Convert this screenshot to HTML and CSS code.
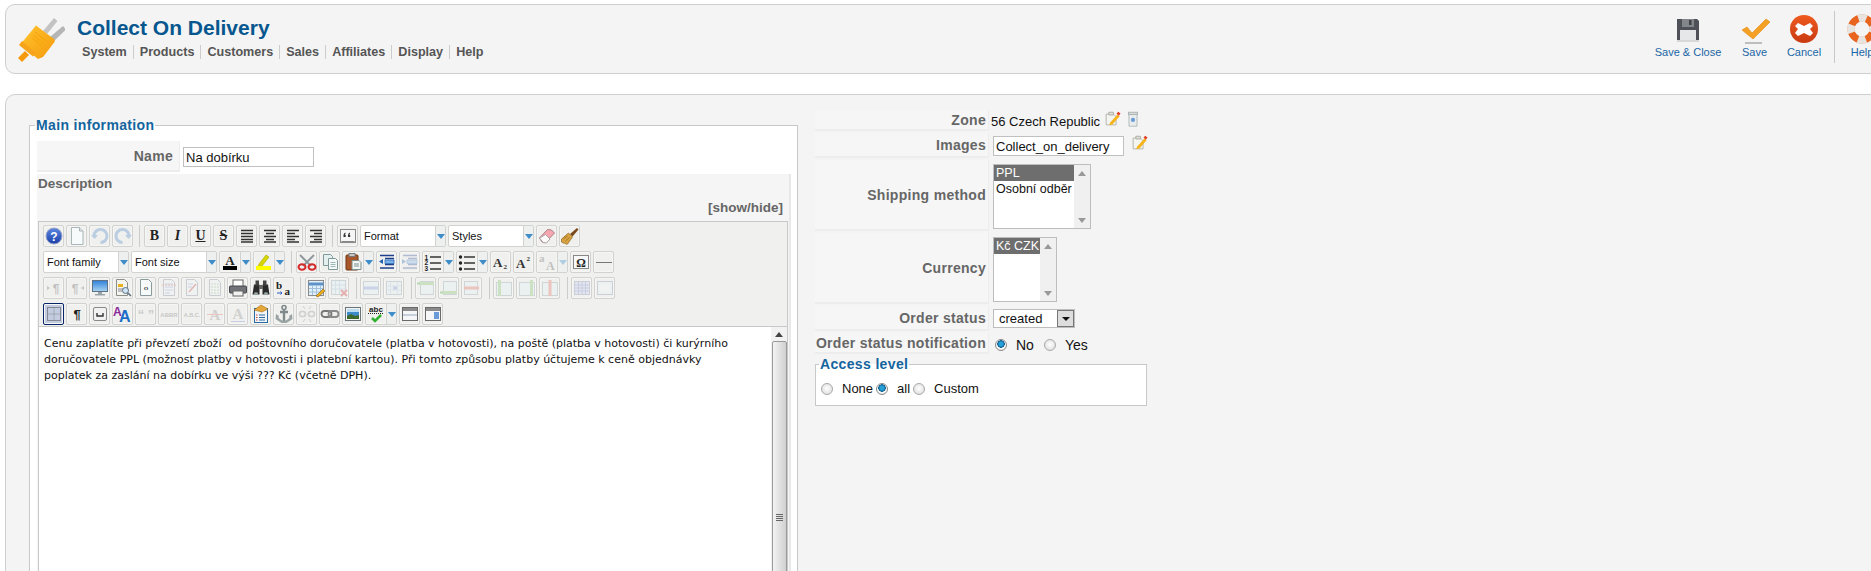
FILE: index.html
```html
<!DOCTYPE html>
<html lang="cs">
<head>
<meta charset="utf-8">
<title>Collect On Delivery</title>
<link rel="stylesheet" href="styles.css">
</head>
<body>
<svg class="defs" aria-hidden="true">
<defs>
<linearGradient id="gBlue" x1="0" y1="0" x2="0" y2="1"><stop offset="0" stop-color="#5b86e0"/><stop offset="1" stop-color="#1a3fa8"/></linearGradient>
<linearGradient id="gOrange" x1="0" y1="0" x2="1" y2="1"><stop offset="0" stop-color="#ffc42e"/><stop offset="1" stop-color="#f59a0c"/></linearGradient>
<linearGradient id="gRed" x1="0" y1="0" x2="0" y2="1"><stop offset="0" stop-color="#ee5a1e"/><stop offset="1" stop-color="#c93a12"/></linearGradient>
<linearGradient id="gScreen" x1="0" y1="0" x2="0" y2="1"><stop offset="0" stop-color="#2f7fd8"/><stop offset="1" stop-color="#a9d4f4"/></linearGradient>
<symbol id="i-help" viewBox="0 0 20 20"><circle cx="10" cy="10" r="8" fill="url(#gBlue)" stroke="#9aa6c8"/><text x="10" y="14.500" class="ig b" font-size="12" fill="#fff" text-anchor="middle">?</text></symbol>
<symbol id="i-new" viewBox="0 0 20 20"><path d="M4.500 1.500h8l3.500 3.500v13.500h-11.500z" fill="#f8fbfb" stroke="#a9b6b6"/><path d="M12.500 1.500v3.500h3.500" fill="#dfe8e8" stroke="#a9b6b6"/></symbol>
<symbol id="i-undo" viewBox="0 0 20 20"><path d="M4 10a6.500 6.500 0 1 1 6.500 6.500" fill="none" stroke="#3f7fc4" stroke-width="3"/><path d="M1 9l3.500 4 3.500-4z" fill="#3f7fc4" transform="rotate(0)"/></symbol>
<symbol id="i-redo" viewBox="0 0 20 20"><path d="M16 10a6.500 6.500 0 1 0-6.500 6.500" fill="none" stroke="#3f7fc4" stroke-width="3"/><path d="M19 9l-3.500 4-3.500-4z" fill="#3f7fc4"/></symbol>
<symbol id="i-full" viewBox="0 0 20 20"><path d="M4 4.500h12M4 7.500h12M4 10.500h12M4 13.500h12M4 16h12" stroke="#333" stroke-width="1.300"/></symbol>
<symbol id="i-center" viewBox="0 0 20 20"><path d="M4 4.500h12M6 7.500h8M4 10.500h12M6 13.500h8M4 16h12" stroke="#333" stroke-width="1.300"/></symbol>
<symbol id="i-left" viewBox="0 0 20 20"><path d="M4 4.500h12M4 7.500h8M4 10.500h12M4 13.500h8M4 16h12" stroke="#333" stroke-width="1.300"/></symbol>
<symbol id="i-right" viewBox="0 0 20 20"><path d="M4 4.500h12M8 7.500h8M4 10.500h12M8 13.500h8M4 16h12" stroke="#333" stroke-width="1.300"/></symbol>
<symbol id="i-quote" viewBox="0 0 20 20"><rect x="2.500" y="3.500" width="15" height="13" fill="#f6f6f6" stroke="#8a8a8a"/><rect x="3.500" y="15" width="13" height="1" fill="#888"/><path d="M5.500 11V9.200q0-1.800 2-2.700v1.200q-.7.400-.7 1h.9V11zM10 11V9.200q0-1.800 2-2.700v1.200q-.7.400-.7 1h.9V11z" fill="#333"/></symbol>
<symbol id="i-eraser" viewBox="0 0 20 20"><path d="M2.500 12l8-8.500 4 .5 3 3-9 9.500-3.500-.5z" fill="#f6a6b0" stroke="#b08088"/><path d="M2.500 12l3.500 4.500 3.500.5 3.500-4-4.500-4.500z" fill="#fbfbfb" stroke="#b0a0a0"/></symbol>
<symbol id="i-broom" viewBox="0 0 20 20"><path d="M1.500 13l7-6 4 4-5 7c-2 1-2.500-1-3-1s-1 .5-3-1z" fill="#d9a441" stroke="#8c6420" stroke-width=".7"/><path d="M3.500 13l4-3M5.500 15l4-3.500" stroke="#8c6420" stroke-width=".7"/><path d="M10 8l7-6 1.500 1.500-6 7z" fill="#7a4a1c"/></symbol>
<symbol id="i-color" viewBox="0 0 20 20"><text x="10" y="12.500" class="ig s" font-size="13" fill="#222" text-anchor="middle">A</text><rect x="3" y="14" width="14" height="4" fill="#000"/></symbol>
<symbol id="i-hilite" viewBox="0 0 20 20"><path d="M5 12l7-9 3 2-7 9-4 1z" fill="#d8d600" stroke="#a8a800" stroke-width=".6"/><rect x="2" y="14" width="15" height="4" fill="#ff0"/></symbol>
<symbol id="i-cut" viewBox="0 0 20 20"><path d="M3 3l11 11M17 3L6 14" stroke="#8d979c" stroke-width="1.800"/><ellipse cx="5" cy="15" rx="3.500" ry="2.700" fill="none" stroke="#d52a2a" stroke-width="2"/><ellipse cx="15" cy="15" rx="3.500" ry="2.700" fill="none" stroke="#d52a2a" stroke-width="2"/></symbol>
<symbol id="i-copy" viewBox="0 0 20 20"><path d="M3.500 2.500h7l2 2v9h-9z" fill="#e4f0ee" stroke="#7f9a98"/><path d="M8.500 6.500h7l2 2v9h-9z" fill="#f4faf9" stroke="#7f9a98"/><path d="M10.500 10.500h5M10.500 12.500h5M10.500 14.500h5" stroke="#9db5b3"/></symbol>
<symbol id="i-paste" viewBox="0 0 20 20"><rect x="3" y="3" width="12" height="15" rx="1" fill="#a8562a" stroke="#6d3615"/><rect x="6" y="1.500" width="6" height="3" fill="#c9c9c9" stroke="#777"/><path d="M9 8.500h7l2 2v7H9z" fill="#f2f6f5" stroke="#7c8f8d"/><path d="M11 12h5M11 14h5" stroke="#7c8f8d"/></symbol>
<symbol id="i-outdent" viewBox="0 0 20 20"><path d="M3 3.500h14M8 6.500h9M8 12.500h9M3 16h14" stroke="#1f3f8c" stroke-width="1.300"/><rect x="7" y="8" width="10" height="3.500" fill="#7ab2ec" stroke="#1f5fb0" stroke-width=".7"/><path d="M2 7l4 2.500L2 12z" fill="#1f5fb0"/></symbol>
<symbol id="i-indent" viewBox="0 0 20 20"><path d="M3 3.500h14M8 6.500h9M8 12.500h9M3 16h14" stroke="#1f3f8c" stroke-width="1.300"/><rect x="8" y="8" width="9" height="3.500" fill="#7ab2ec" stroke="#1f5fb0" stroke-width=".7"/><path d="M6 7l-4 2.500L6 12z" fill="#1f5fb0"/></symbol>
<symbol id="i-num" viewBox="0 0 20 20"><text x="1.500" y="7.500" class="ig b" font-size="6.500" fill="#222">1</text><text x="1.500" y="13.300" class="ig b" font-size="6.500" fill="#222">2</text><text x="1.500" y="19" class="ig b" font-size="6.500" fill="#222">3</text><path d="M7 5h11M7 11h11M7 17h11" stroke="#333" stroke-width="1.300"/></symbol>
<symbol id="i-bul" viewBox="0 0 20 20"><circle cx="3.500" cy="5" r="1.700" fill="#222"/><circle cx="3.500" cy="11" r="1.700" fill="#222"/><circle cx="3.500" cy="17" r="1.700" fill="#222"/><path d="M7 5h11M7 11h11M7 17h11" stroke="#333" stroke-width="1.300"/></symbol>
<symbol id="i-sub" viewBox="0 0 20 20"><text x="2" y="15" class="ig s" font-size="13" fill="#333">A</text><text x="12.500" y="17" class="ig s" font-size="7" fill="#333">2</text></symbol>
<symbol id="i-sup" viewBox="0 0 20 20"><text x="2" y="16" class="ig s" font-size="13" fill="#333">A</text><text x="12.500" y="9" class="ig s" font-size="7" fill="#333">2</text></symbol>
<symbol id="i-fontab" viewBox="0 0 20 20"><text x="2" y="10" class="ig s" font-size="11" fill="#555">a</text><text x="9" y="18" class="ig s" font-size="12" fill="#555">A</text></symbol>
<symbol id="i-omega" viewBox="0 0 20 20"><rect x="2.500" y="3.500" width="15" height="13" fill="#f8f8f8" stroke="#888"/><text x="10" y="14.500" class="ig s b" font-size="12" fill="#222" text-anchor="middle">Ω</text></symbol>
<symbol id="i-hr" viewBox="0 0 20 20"><path d="M2 10.500h16" stroke="#777"/></symbol>
<symbol id="i-pilr" viewBox="0 0 20 20"><path d="M3 8l3 2-3 2z" fill="#666"/><text x="12" y="15" class="ig b" font-size="12" fill="#555" text-anchor="middle">¶</text></symbol>
<symbol id="i-pill" viewBox="0 0 20 20"><path d="M17 8l-3 2 3 2z" fill="#666"/><text x="8" y="15" class="ig b" font-size="12" fill="#555" text-anchor="middle">¶</text></symbol>
<symbol id="i-monitor" viewBox="0 0 20 20"><rect x="2.500" y="2.500" width="15" height="11" fill="url(#gScreen)" stroke="#5f7384"/><path d="M8 14h4v2H8zM5 16h10v1.500H5z" fill="#9aa3aa"/></symbol>
<symbol id="i-preview" viewBox="0 0 20 20"><path d="M3.500 1.500h8l3 3v13h-11z" fill="#f5f5ee" stroke="#8a8f8a"/><rect x="5" y="6" width="5" height="3" fill="#e9b020"/><path d="M5 11h6M5 13h4" stroke="#889"/><circle cx="12.500" cy="12.500" r="3" fill="#cfe4f4" stroke="#5b6d80"/><path d="M15 15l3 3" stroke="#5b6d80" stroke-width="1.500"/></symbol>
<symbol id="i-code" viewBox="0 0 20 20"><path d="M4.500 1.500h8l3 3v13h-11z" fill="#f7fafa" stroke="#8a9a9a"/><text x="10" y="13" class="ig b" font-size="7" fill="#333" text-anchor="middle">‹›</text></symbol>
<symbol id="i-doc1" viewBox="0 0 20 20"><path d="M4.500 1.500h8l3 3v13h-11z" fill="#f0f4fa" stroke="#708090"/><path d="M6 6h8M6 9h8M6 12h8M6 15h5" stroke="#7a9ad0"/><path d="M3 7h14" stroke="#d04040" stroke-dasharray="2 1"/></symbol>
<symbol id="i-doc2" viewBox="0 0 20 20"><path d="M4.500 1.500h8l3 3v13h-11z" fill="#f0f4fa" stroke="#708090"/><path d="M7 14l7-8" stroke="#c03030" stroke-width="1.500"/><path d="M6 6h5M6 9h4" stroke="#7a9ad0"/></symbol>
<symbol id="i-doc3" viewBox="0 0 20 20"><path d="M4.500 1.500h8l3 3v13h-11z" fill="#f0f4fa" stroke="#708090"/><path d="M6 6h8M6 9h8M6 12h8M6 15h8" stroke="#7ab070" stroke-dasharray="2 1"/></symbol>
<symbol id="i-print" viewBox="0 0 20 20"><rect x="5" y="2" width="10" height="7" fill="#fff" stroke="#666"/><rect x="1.500" y="8" width="17" height="7" rx="1" fill="#6f7377" stroke="#44484c"/><rect x="5" y="13" width="10" height="5" fill="#f2f2f2" stroke="#666"/></symbol>
<symbol id="i-find" viewBox="0 0 20 20"><path d="M3 6.500h5.500v10H1.500zM11.500 6.500H17l1.500 10h-7z" fill="#2a2a2a"/><rect x="4.500" y="2.500" width="3.500" height="5" fill="#444"/><rect x="12" y="2.500" width="3.500" height="5" fill="#444"/><rect x="8" y="7" width="4" height="4" fill="#666"/><ellipse cx="5" cy="15.500" rx="2" ry="1.200" fill="#9aa"/><ellipse cx="15" cy="15.500" rx="2" ry="1.200" fill="#9aa"/></symbol>
<symbol id="i-replace" viewBox="0 0 20 20"><text x="2" y="11" class="ig s b" font-size="11" fill="#222">b</text><text x="10.500" y="17" class="ig s b" font-size="11" fill="#222">a</text><path d="M3 15h5l-1.500-1.500M8 15l-1.500 1.500" fill="none" stroke="#2a5ac4"/></symbol>
<symbol id="i-table" viewBox="0 0 20 20"><rect x="2.500" y="2.500" width="15" height="15" fill="#e2f0fb" stroke="#8a8a8a"/><path d="M2.500 6h15" stroke="#5f93c8" stroke-width="3"/><path d="M6.500 7v10M10.500 7v10M14.500 7v10M3 10.500h14M3 14h14" stroke="#9fc0dc"/><path d="M10 18l7-7 2 2-7 6z" fill="#eeb018" stroke="#8a5a10" stroke-width=".6"/></symbol>
<symbol id="i-tabdel" viewBox="0 0 20 20"><rect x="2.500" y="2.500" width="14" height="14" fill="#e2f0fb" stroke="#8a9aa6"/><path d="M6.500 3v13M10.500 3v13M3 7h13M3 11h13" stroke="#9fc0dc"/><path d="M12 12l6 6M18 12l-6 6" stroke="#d02020" stroke-width="2"/></symbol>
<symbol id="i-row" viewBox="0 0 20 20"><rect x="2.500" y="3.500" width="15" height="13" fill="#e2f0fb" stroke="#8a9aa6"/><rect x="3" y="8.500" width="14" height="3" fill="#7a8fd8"/></symbol>
<symbol id="i-cell" viewBox="0 0 20 20"><rect x="2.500" y="3.500" width="15" height="13" fill="#e2f0fb" stroke="#8a9aa6"/><path d="M6.500 4v12M13.500 4v12M3 8h14M3 12h14" stroke="#b0cce0"/><rect x="9" y="8.500" width="4" height="3" fill="#7a8fd8"/></symbol>
<symbol id="i-rowb" viewBox="0 0 20 20"><rect x="4.500" y="3.500" width="13" height="13" fill="#e2f0fb" stroke="#8a9aa6"/><rect x="3" y="4" width="15" height="3" fill="#7ac060"/><path d="M1 5.500h3" stroke="#40a030" stroke-width="2"/></symbol>
<symbol id="i-rowa" viewBox="0 0 20 20"><rect x="4.500" y="3.500" width="13" height="13" fill="#e2f0fb" stroke="#8a9aa6"/><rect x="3" y="13" width="15" height="3" fill="#7ac060"/><path d="M1 14.500h3" stroke="#40a030" stroke-width="2"/></symbol>
<symbol id="i-rowd" viewBox="0 0 20 20"><rect x="2.500" y="3.500" width="13" height="13" fill="#e2f0fb" stroke="#8a9aa6"/><rect x="2" y="8.500" width="15" height="3" fill="#e06050"/></symbol>
<symbol id="i-colb" viewBox="0 0 20 20"><rect x="2.500" y="4.500" width="15" height="13" fill="#e2f0fb" stroke="#8a9aa6"/><rect x="4" y="2" width="3" height="16" fill="#7ac060"/></symbol>
<symbol id="i-cola" viewBox="0 0 20 20"><rect x="2.500" y="4.500" width="15" height="13" fill="#e2f0fb" stroke="#8a9aa6"/><rect x="13" y="2" width="3" height="16" fill="#7ac060"/></symbol>
<symbol id="i-cold" viewBox="0 0 20 20"><rect x="2.500" y="4.500" width="15" height="13" fill="#e2f0fb" stroke="#8a9aa6"/><rect x="8.500" y="2" width="3" height="16" fill="#e06050"/></symbol>
<symbol id="i-merge" viewBox="0 0 20 20"><rect x="2.500" y="3.500" width="15" height="13" fill="#c8d0f0" stroke="#7a86a8"/><path d="M6.500 4v12M10 4v12M13.500 4v12M3 7h14M3 10h14M3 13h14" stroke="#6a7ec8"/></symbol>
<symbol id="i-split" viewBox="0 0 20 20"><rect x="2.500" y="3.500" width="15" height="13" fill="#e2f0fb" stroke="#7a86a8"/><rect x="5" y="6" width="10" height="8" fill="#f6fbff"/></symbol>
<symbol id="i-grid" viewBox="0 0 20 20"><rect x="3.500" y="3.500" width="13" height="13" fill="none" stroke="#444" stroke-dasharray="1 1"/><path d="M3.500 10h13M10 3.500v13" stroke="#888" stroke-dasharray="1 1"/></symbol>
<symbol id="i-pil" viewBox="0 0 20 20"><text x="10" y="15" class="ig b" font-size="13" fill="#222" text-anchor="middle">¶</text></symbol>
<symbol id="i-nb" viewBox="0 0 20 20"><rect x="3.500" y="3.500" width="13" height="13" rx="1.500" fill="#f2f2f2" stroke="#8a8a8a"/><path d="M7 9v3h6V9" fill="none" stroke="#333" stroke-width="1.400"/></symbol>
<symbol id="i-aa" viewBox="0 0 20 20"><text x="0" y="12" class="ig b" font-size="12" fill="#8a2a9a">A</text><text x="6" y="18" class="ig b" font-size="16" fill="#1a6ec8">A</text></symbol>
<symbol id="i-q2" viewBox="0 0 20 20"><text x="10" y="15" class="ig b" font-size="13" fill="#777" text-anchor="middle">“ ”</text></symbol>
<symbol id="i-abbr" viewBox="0 0 20 20"><text x="10" y="13" class="ig b" font-size="6" fill="#666" text-anchor="middle">ABBR</text></symbol>
<symbol id="i-abc" viewBox="0 0 20 20"><text x="10" y="13" class="ig b" font-size="5.500" fill="#666" text-anchor="middle">A.B.C.</text></symbol>
<symbol id="i-astrike" viewBox="0 0 20 20"><text x="10" y="16" class="ig s" font-size="15" fill="#888" text-anchor="middle">A</text><path d="M2 10.500h16" stroke="#e06060"/></symbol>
<symbol id="i-aline" viewBox="0 0 20 20"><text x="10" y="15" class="ig s" font-size="15" fill="#888" text-anchor="middle">A</text><path d="M3 17.500h14" stroke="#6080d0"/></symbol>
<symbol id="i-note" viewBox="0 0 20 20"><rect x="3.500" y="4.500" width="13" height="14" fill="#f2f6fa" stroke="#2a6aa0"/><path d="M3 6l7-5 7 4-6 3z" fill="#e6a83a" stroke="#a87018" stroke-width=".6"/><path d="M8 11h6M8 13.500h6M8 16h6" stroke="#2a6aa0"/><path d="M5 11h1.500M5 13.500h1.500M5 16h1.500" stroke="#c04030"/></symbol>
<symbol id="i-anchor" viewBox="0 0 20 20"><circle cx="10" cy="3.500" r="2" fill="none" stroke="#808a8a" stroke-width="1.600"/><path d="M10 5v12M6 8h8" stroke="#808a8a" stroke-width="2.400"/><path d="M2 10l3 2-.5 1.500c1.500 2 3 2.700 5.500 3.500 2.500-.8 4-1.500 5.500-3.500L15 12l3-2 .5 5-6 4h-5l-6-4z" fill="#9aa4a4"/></symbol>
<symbol id="i-unlink" viewBox="0 0 20 20"><rect x="2.500" y="7.500" width="6" height="5" rx="2.500" fill="none" stroke="#888" stroke-width="1.600"/><rect x="11.500" y="7.500" width="6" height="5" rx="2.500" fill="none" stroke="#888" stroke-width="1.600"/><path d="M6 2l2 3M14 2l-2 3M6 18l2-3M14 18l-2-3" stroke="#888"/></symbol>
<symbol id="i-link" viewBox="0 0 20 20"><rect x="1.500" y="7" width="10" height="6" rx="3" fill="none" stroke="#777" stroke-width="1.800"/><rect x="8.500" y="7" width="10" height="6" rx="3" fill="none" stroke="#8a8a8a" stroke-width="1.800"/></symbol>
<symbol id="i-image" viewBox="0 0 20 20"><rect x="2.500" y="3.500" width="15" height="13" fill="#f2f4f4" stroke="#6a7478"/><rect x="4" y="5" width="12" height="10" fill="#3f8ac8"/><path d="M4 12l4-2 4 2 4-1v4H4z" fill="#3d6a2c"/><rect x="4" y="5" width="12" height="3" fill="#bcdcf0"/></symbol>
<symbol id="i-spell" viewBox="0 0 20 20"><text x="10" y="7.500" class="ig b" font-size="8" fill="#222" text-anchor="middle">abc</text><path d="M2 9.500h16" stroke="#222" stroke-dasharray="1 1"/><path d="M6 14l3 3 6-6" fill="none" stroke="#30b030" stroke-width="2.600"/></symbol>
<symbol id="i-layer1" viewBox="0 0 20 20"><rect x="2.500" y="3.500" width="15" height="13" fill="#f4f6f8" stroke="#6a6a6a"/><rect x="3" y="4" width="14" height="3" fill="#8a8a8a"/><path d="M3 11h14" stroke="#9ab"/></symbol>
<symbol id="i-layer2" viewBox="0 0 20 20"><rect x="2.500" y="3.500" width="15" height="13" fill="#f4f6f8" stroke="#6a6a6a"/><rect x="3" y="4" width="14" height="3" fill="#8a8a8a"/><rect x="11" y="8" width="5" height="7" fill="#6a9ad8"/></symbol>
<symbol id="i-edit" viewBox="0 0 20 20"><path d="M3.500 4.500h8l3 3v9h-11z" fill="#f4f4f0" stroke="#b0b0a8"/><path d="M6.500 2.500h5v3h-5z" fill="#e4e4de" stroke="#a8a8a0"/><path d="M8 14l8-9 2.500 2-8 9-3.500 1z" fill="#f6b51c"/><path d="M15 4l2-2 2.500 2-2 2.500z" fill="#e0402a"/></symbol>
<symbol id="i-trash" viewBox="0 0 20 20"><path d="M5.500 5h9v13h-9z" fill="#e8ecec" stroke="#b0b8b8"/><rect x="5" y="2.500" width="10" height="2.500" fill="#d8dcdc" stroke="#a8b0b0"/><circle cx="10" cy="11" r="2.300" fill="#6a9ad8"/></symbol>
</defs>
</svg>

<header class="panel topbar">
  <svg class="plug" viewBox="0 0 48 48" aria-hidden="true">
    <path d="M26 16L37 3l3.500 3L30 19z" fill="#c3c3c3"/><path d="M33 22L46 11l3 3.500L37 26z" fill="#b5b5b5"/>
    <path d="M19 10.500L37 24c1 1 1 2 .5 3L26 42l-5 2-16-13.500 0-3z" fill="url(#gOrange)"/>
    <path d="M5 26l14 12-3 3.500L2 30z" fill="#f7a41d"/>
    <path d="M8 36l4 4-7 7-4-4z" fill="#f59a0c"/>
    <path d="M18 17l12 10M16 20l12 10M15 23l10 8" stroke="#f7a80f" stroke-width="1.500"/>
  </svg>
  <div class="heading">
    <h1 class="title">Collect On Delivery</h1>
    <nav class="menu"><a>System</a><a>Products</a><a>Customers</a><a>Sales</a><a>Affiliates</a><a>Display</a><a>Help</a></nav>
  </div>
  <div class="actions">
    <a class="action">
      <svg class="action-icon" viewBox="0 0 32 32"><path d="M5 5h20l2 2v19H5z" fill="#4e5258"/><rect x="10" y="5" width="12" height="8" fill="#83878c"/><rect x="17" y="6" width="2.500" height="5" fill="#3f4247"/><path d="M8 16h16v10H8z" fill="#e6e7e8"/><path d="M5 27h22" stroke="#bbb"/></svg>
      <span>Save &amp; Close</span>
    </a>
    <a class="action">
      <svg class="action-icon" viewBox="0 0 32 32"><path d="M3 16l5-3 5 6L27 5l4 3-17 17z" fill="#f4a024" stroke="#e0880f" stroke-width=".6"/><path d="M6 29h17" stroke="#bdbdbd" stroke-width="2"/></svg>
      <span>Save</span>
    </a>
    <a class="action">
      <svg class="action-icon" viewBox="0 0 32 32"><circle cx="16" cy="15" r="14" fill="url(#gRed)"/><path d="M10 9l6 3 6-3 3 3-3 3 3 4-3 3-6-3-6 3-3-3 3-4-3-3z" fill="#fff"/></svg>
      <span>Cancel</span>
    </a>
    <div class="action-sep"></div>
    <a class="action">
      <svg class="action-icon" viewBox="0 0 32 32"><circle cx="16" cy="15" r="11" fill="none" stroke="#e8641f" stroke-width="7"/><circle cx="16" cy="15" r="11" fill="none" stroke="#e8e4e0" stroke-width="7.500" stroke-dasharray="8 9.280" stroke-dashoffset="4"/></svg>
      <span>Help</span>
    </a>
  </div>
</header>

<main class="panel content">
  <div class="col-left">
    <fieldset class="box main-box">
      <legend>Main information</legend>
      <div class="name-row">
        <label class="label name-label">Name</label>
        <input class="text name-input" type="text" value="Na dobírku">
      </div>
      <div class="desc">
        <div class="desc-title">Description</div>
        <div class="showhide">[show/hide]</div>
        <div class="editor">
          <div class="tb">
            <div class="tb-row">
              <b class="btn"><svg><use href="#i-help"/></svg></b>
              <b class="btn"><svg><use href="#i-new"/></svg></b>
              <b class="btn off"><svg><use href="#i-undo"/></svg></b>
              <b class="btn off"><svg><use href="#i-redo"/></svg></b>
              <i class="sep"></i>
              <b class="btn letter serif">B</b>
              <b class="btn letter serif it">I</b>
              <b class="btn letter serif un">U</b>
              <b class="btn letter serif st">S</b>
              <b class="btn"><svg><use href="#i-full"/></svg></b>
              <b class="btn"><svg><use href="#i-center"/></svg></b>
              <b class="btn"><svg><use href="#i-left"/></svg></b>
              <b class="btn"><svg><use href="#i-right"/></svg></b>
              <i class="sep"></i>
              <b class="btn"><svg><use href="#i-quote"/></svg></b>
              <span class="combo"><span>Format</span><u class="drop"></u></span>
              <span class="combo"><span>Styles</span><u class="drop"></u></span>
              <b class="btn"><svg><use href="#i-eraser"/></svg></b>
              <b class="btn"><svg><use href="#i-broom"/></svg></b>
            </div>
            <div class="tb-row">
              <span class="combo"><span>Font family</span><u class="drop"></u></span>
              <span class="combo"><span>Font size</span><u class="drop"></u></span>
              <span class="split"><b class="btn"><svg><use href="#i-color"/></svg></b><u class="drop"></u></span>
              <span class="split"><b class="btn"><svg><use href="#i-hilite"/></svg></b><u class="drop"></u></span>
              <i class="sep"></i>
              <b class="btn"><svg><use href="#i-cut"/></svg></b>
              <b class="btn"><svg><use href="#i-copy"/></svg></b>
              <span class="split"><b class="btn"><svg><use href="#i-paste"/></svg></b><u class="drop"></u></span>
              <b class="btn"><svg><use href="#i-indent"/></svg></b>
              <b class="btn off"><svg><use href="#i-outdent"/></svg></b>
              <span class="split"><b class="btn"><svg><use href="#i-num"/></svg></b><u class="drop"></u></span>
              <span class="split"><b class="btn"><svg><use href="#i-bul"/></svg></b><u class="drop"></u></span>
              <b class="btn"><svg><use href="#i-sub"/></svg></b>
              <b class="btn"><svg><use href="#i-sup"/></svg></b>
              <span class="split off"><b class="btn"><svg><use href="#i-fontab"/></svg></b><u class="drop"></u></span>
              <b class="btn"><svg><use href="#i-omega"/></svg></b>
              <b class="btn"><svg><use href="#i-hr"/></svg></b>
            </div>
            <div class="tb-row">
              <b class="btn off"><svg><use href="#i-pilr"/></svg></b>
              <b class="btn off"><svg><use href="#i-pill"/></svg></b>
              <b class="btn"><svg><use href="#i-monitor"/></svg></b>
              <b class="btn"><svg><use href="#i-preview"/></svg></b>
              <b class="btn"><svg><use href="#i-code"/></svg></b>
              <b class="btn off"><svg><use href="#i-doc1"/></svg></b>
              <b class="btn off"><svg><use href="#i-doc2"/></svg></b>
              <b class="btn off"><svg><use href="#i-doc3"/></svg></b>
              <b class="btn"><svg><use href="#i-print"/></svg></b>
              <b class="btn"><svg><use href="#i-find"/></svg></b>
              <b class="btn"><svg><use href="#i-replace"/></svg></b>
              <i class="sep wide"></i>
              <b class="btn"><svg><use href="#i-table"/></svg></b>
              <b class="btn off"><svg><use href="#i-tabdel"/></svg></b>
              <i class="sep wide2"></i>
              <b class="btn off"><svg><use href="#i-row"/></svg></b>
              <b class="btn off"><svg><use href="#i-cell"/></svg></b>
              <i class="sep wide2"></i>
              <b class="btn off"><svg><use href="#i-rowb"/></svg></b>
              <b class="btn off"><svg><use href="#i-rowa"/></svg></b>
              <b class="btn off"><svg><use href="#i-rowd"/></svg></b>
              <i class="sep wide2"></i>
              <b class="btn off"><svg><use href="#i-colb"/></svg></b>
              <b class="btn off"><svg><use href="#i-cola"/></svg></b>
              <b class="btn off"><svg><use href="#i-cold"/></svg></b>
              <i class="sep wide2"></i>
              <b class="btn off"><svg><use href="#i-merge"/></svg></b>
              <b class="btn off"><svg><use href="#i-split"/></svg></b>
            </div>
            <div class="tb-row">
              <b class="btn active"><svg><use href="#i-grid"/></svg></b>
              <b class="btn"><svg><use href="#i-pil"/></svg></b>
              <b class="btn"><svg><use href="#i-nb"/></svg></b>
              <b class="btn"><svg><use href="#i-aa"/></svg></b>
              <b class="btn off"><svg><use href="#i-q2"/></svg></b>
              <b class="btn off"><svg><use href="#i-abbr"/></svg></b>
              <b class="btn off"><svg><use href="#i-abc"/></svg></b>
              <b class="btn off"><svg><use href="#i-astrike"/></svg></b>
              <b class="btn off"><svg><use href="#i-aline"/></svg></b>
              <b class="btn"><svg><use href="#i-note"/></svg></b>
              <b class="btn"><svg><use href="#i-anchor"/></svg></b>
              <b class="btn off"><svg><use href="#i-unlink"/></svg></b>
              <b class="btn"><svg><use href="#i-link"/></svg></b>
              <b class="btn"><svg><use href="#i-image"/></svg></b>
              <span class="split"><b class="btn"><svg><use href="#i-spell"/></svg></b><u class="drop"></u></span>
              <b class="btn"><svg><use href="#i-layer1"/></svg></b>
              <b class="btn"><svg><use href="#i-layer2"/></svg></b>
            </div>
          </div>
          <div class="doc">
            <p class="doc-text">Cenu zaplatíte při převzetí zboží&nbsp; od poštovního doručovatele (platba v hotovosti), na poště (platba v hotovosti) či kurýrního<br>doručovatele PPL (možnost platby v hotovosti i platební kartou). Při tomto způsobu platby účtujeme k ceně objednávky<br>poplatek za zaslání na dobírku ve výši ??? Kč (včetně DPH).</p>
            <div class="vscroll doc-scroll">
              <div class="arrow up"></div>
              <div class="thumb"><div class="grip"></div></div>
            </div>
          </div>
        </div>
      </div>
    </fieldset>
  </div>

  <div class="col-right">
    <div class="form-row r-zone">
      <label class="label">Zone</label>
      <div class="value zone-val"><span>56 Czech Republic</span><svg class="mini"><use href="#i-edit"/></svg><svg class="mini"><use href="#i-trash"/></svg></div>
    </div>
    <div class="form-row r-images">
      <label class="label">Images</label>
      <div class="value images-val"><input class="text images-input" type="text" value="Collect_on_delivery"><svg class="mini up"><use href="#i-edit"/></svg></div>
    </div>
    <div class="form-row r-list">
      <label class="label">Shipping method</label>
      <div class="value">
        <div class="listbox ship">
          <div class="opts"><div class="opt sel">PPL</div><div class="opt">Osobní odběr</div></div>
          <div class="vscroll plain"><div class="arrow up"></div><div class="arrow down"></div></div>
        </div>
      </div>
    </div>
    <div class="form-row r-list">
      <label class="label">Currency</label>
      <div class="value">
        <div class="listbox cur">
          <div class="opts"><div class="opt sel">Kč CZK</div></div>
          <div class="vscroll plain"><div class="arrow up"></div><div class="arrow down"></div></div>
        </div>
      </div>
    </div>
    <div class="form-row r-status">
      <label class="label">Order status</label>
      <div class="value"><div class="selectbox"><span>created</span><span class="sel-btn"></span></div></div>
    </div>
    <div class="form-row r-notify">
      <label class="label">Order status notification</label>
      <div class="value radios"><input type="radio" name="n" class="radio" checked><span class="r-text">No</span><input type="radio" name="n" class="radio"><span class="r-text">Yes</span></div>
    </div>
    <fieldset class="box access">
      <legend>Access level</legend>
      <div class="radios tight"><input type="radio" name="a" class="radio"><span class="r-text">None</span><input type="radio" name="a" class="radio" checked><span class="r-text">all</span><input type="radio" name="a" class="radio"><span class="r-text">Custom</span></div>
    </fieldset>
  </div>
</main>
</body>
</html>
```
FILE: styles.css
```css
* { box-sizing: border-box; }
html, body { margin: 0; padding: 0; height: 571px; overflow: hidden; background: #fff; }
body { padding: 4px 0 0 5px; width: 1900px; font-family: "Liberation Sans", Arial, sans-serif; font-size: 13px; color: #111; }
.defs { display: block; width: 0; height: 0; overflow: hidden; }
.ig { font-family: "Liberation Sans", Arial, sans-serif; }
.ig.s { font-family: "Liberation Serif", serif; font-weight: bold; }
.ig.b { font-weight: bold; }

.panel { background: #f4f4f4; border: 1px solid #cfcfcf; border-radius: 10px; }
.topbar { display: flex; height: 70px; margin-bottom: 20px; padding: 6px 23px 0 11px; }
.plug { width: 48px; height: 48px; margin-top: 4px; margin-right: 12px; flex: none; }
.heading { display: flex; flex-direction: column; }
.title { margin: 6px 0 0; font-size: 21px; line-height: 22px; font-weight: bold; color: #07578f; white-space: nowrap; }
.menu { display: flex; margin: 6px 0 0 5px; }
.menu a { font-size: 12.600px; font-weight: bold; line-height: 14px; color: #555; padding: 0 6px; border-left: 1px solid #ccc; }
.menu a:first-child { border-left: 0; padding-left: 0; }

.actions { display: flex; margin-left: auto; }
.action { display: flex; flex-direction: column; align-items: center; padding-top: 3px; color: #1a66a6; font-size: 11px; line-height: 13px; white-space: nowrap; }
.action-icon { width: 32px; height: 32px; flex: none; }
.action:nth-child(1) { width: 66px; margin-right: 16px; }
.action:nth-child(2) { width: 35px; margin-right: 12px; }
.action:nth-child(3) { width: 40px; }
.action:last-child { width: 28px; margin-left: 13px; }
.action-sep { width: 1px; height: 52px; margin: 0 0 0 10px; background: #c8c8c8; }

.content { display: flex; height: 520px; padding: 15px 0 0 23px; }
.col-left { width: 770px; flex: none; padding-top: 8px; }
.col-right { width: 333px; margin-left: 16px; flex: none; }

.box { margin: 0; padding: 0; border: 1px solid #c8c8c8; background: #fff; min-width: 0; }
.box legend { padding: 0 1px; margin-left: -2px; color: #14649e; font-weight: bold; font-size: 14px; line-height: 15px; letter-spacing: .35px; }
.main-box { width: 769px; height: 480px; padding: 8px 6px 0 7px; }

.label { display: flex; align-items: center; justify-content: flex-end; background: #f6f6f6; color: #666; font-size: 14px; font-weight: bold; letter-spacing: .3px; padding-right: 2px; border-bottom: 2px solid #ededed; border-right: 1px solid #ededed; }
.name-row { display: flex; height: 31px; margin-bottom: 2px; }
.name-label { width: 143px; padding-right: 6px; }
.text { height: 20px; border: 1px solid #c0c0c0; font: 13px "Liberation Sans", Arial, sans-serif; color: #111; padding: 0 2px; background: #fff; }
.name-input { width: 131px; margin: 6px 0 0 3px; }

.desc { background: #f5f5f5; border-right: 2px solid #e8e8e8; height: 400px; padding: 0 0 0 1px; }
.desc-title { font-size: 13.500px; font-weight: bold; color: #666; line-height: 20px; }
.showhide { text-align: right; font-size: 13.500px; font-weight: bold; color: #666; line-height: 20px; margin-top: 4px; padding-right: 6px; height: 23px; }

.editor { border: 1px solid #c8c8c8; margin-right: 2px; background: #f0f0ee; height: 360px; width: 750px; }
.tb { height: 105px; padding: 3px 0 0 4px; border-bottom: 1px solid #c8c8c8; }
.tb-row { display: flex; align-items: flex-start; gap: 2px; height: 26px; }
.btn { display: flex; align-items: center; justify-content: center; width: 21px; height: 22px; flex: none; background: #f0f0ee; border: 1px solid #d2d2d0; border-radius: 2px; box-shadow: inset 0 0 0 1px #f6f6f4; }
.btn svg { width: 20px; height: 20px; flex: none; display: block; }
.off svg { opacity: .3; }
.active { background: #c2cbe0; border-color: #0a246a; }
.letter { font-size: 14px; color: #222; font-weight: bold; }
.serif { font-family: "Liberation Serif", serif; }
.it { font-style: italic; }
.un { text-decoration: underline; }
.st { text-decoration: line-through; }
.sep { display: block; width: 1px; height: 22px; background: #ccc; margin: 0 2px 0 4px; flex: none; }
.sep.wide { margin: 0 2px 0 4px; }
.sep.wide2 { margin: 0 1px 0 5px; }

.combo { display: flex; height: 22px; width: 86px; flex: none; background: #fff; border: 1px solid #d2d2d0; border-radius: 2px; font-style: normal; font-size: 11px; color: #111; align-items: center; }
.combo > span { flex: 1; padding-left: 3px; }
.split { display: flex; flex: none; height: 22px; border: 1px solid #d2d2d0; border-radius: 2px; background: #f0f0ee; }
.split .btn { border: 0; height: 20px; width: 20px; }
.drop { display: flex; align-items: center; justify-content: center; width: 10px; height: 20px; border-left: 1px solid #d2d2d0; text-decoration: none; flex: none; background: #eef0f0; }
.combo .drop { height: 20px; }
.drop::after { content: ""; width: 0; height: 0; border: 4px solid transparent; border-top: 5px solid #3f8dc8; border-bottom: 0; }
.split.off .drop::after { opacity: .35; }
.split.off svg { opacity: .3; }

.doc { display: flex; height: 260px; background: #fff; }
.doc-text { flex: 1; margin: 9px 6px 0 5px; font-family: "DejaVu Sans", Verdana, sans-serif; font-size: 11px; line-height: 16px; color: #111; white-space: nowrap; }
.vscroll { width: 16px; flex: none; background: #f2f2f2; display: flex; flex-direction: column; align-items: center; }
.arrow { width: 0; height: 0; border: 4px solid transparent; flex: none; }
.arrow.up { border-top: 0; border-bottom: 5px solid #444; margin: 5px 0 4px; }
.arrow.down { border-bottom: 0; border-top: 5px solid #999; margin: auto 0 5px; }
.thumb { width: 15px; flex: 1; border: 1px solid #9a9a9a; border-radius: 2px; background: linear-gradient(90deg, #f3f3f3, #d0d0d0); display: flex; justify-content: center; padding-top: 172px; }
.grip { width: 7px; height: 7px; background: repeating-linear-gradient(#666 0 1px, transparent 1px 2px); }

.form-row { display: flex; width: 333px; margin-bottom: 2px; }
.form-row .label { width: 174px; flex: none; }
.value { padding-left: 4px; flex: 1; }
.r-zone { height: 21px; }
.r-images { height: 25px; }
.r-list { height: 71px; }
.r-status { height: 25px; margin-bottom: 2px; }
.r-notify { height: 21px; margin-bottom: 3px; }
.zone-val { display: flex; align-items: flex-start; font-size: 13px; line-height: 16px; padding: 4px 0 0 2px; }
.zone-val span { color: #111; }
.mini { width: 18px; height: 18px; flex: none; margin: -4px 0 0 3px; }
.images-val { display: flex; align-items: flex-start; padding: 3px 0 0 4px; }
.images-input { width: 131px; }
.mini.up { margin: -3px 0 0 6px; width: 18px; height: 20px; }
.r-list .value { padding-top: 4px; }
.listbox { display: flex; height: 65px; border: 1px solid #bdbdbd; background: #fff; font-size: 12.500px; line-height: 16px; }
.ship { width: 98px; }
.cur { width: 64px; }
.opts { flex: 1; min-width: 0; }
.opt { padding-left: 2px; white-space: nowrap; color: #111; }
.opt.sel { background: #6e6e6e; color: #fff; }
.plain { width: 16px; background: #f0f0f0; }
.plain .arrow.up { margin-top: 6px; border-bottom-color: #999; }
.selectbox { display: flex; align-items: center; justify-content: space-between; width: 82px; height: 19px; margin-top: 3px; border: 1px solid #bdbdbd; background: #fff; font-size: 13px; padding-left: 5px; }
.sel-btn { width: 17px; height: 17px; background: #ddd; border: 1px solid #777; display: flex; align-items: center; justify-content: center; }
.sel-btn::after { content: ""; border: 4px solid transparent; border-top: 4px solid #111; border-bottom: 0; }
.radios { display: flex; align-items: center; font-size: 14px; color: #111; padding: 3px 0 0 6px; }
.radio { appearance: none; -webkit-appearance: none; width: 12px; height: 12px; margin: 0; border-radius: 50%; border: 1px solid #a8a8a8; background: radial-gradient(circle at 50% 45%, #fff, #d8d8d8); flex: none; }
.radio:checked { background: radial-gradient(circle at 50% 40%, #25a0d8 0 2px, #0b5a8a 3.500px, #fff 4px, #eaeaea 6px); border-color: #8a8a8a; }
.r-text { margin: 0 10px 0 9px; }
.access { width: 332px; height: 49px; padding: 0 0 0 5px; }
.tight { padding: 9px 0 0 0; font-size: 13px; }
.tight .r-text { margin: 0 3px 0 9px; }
```
